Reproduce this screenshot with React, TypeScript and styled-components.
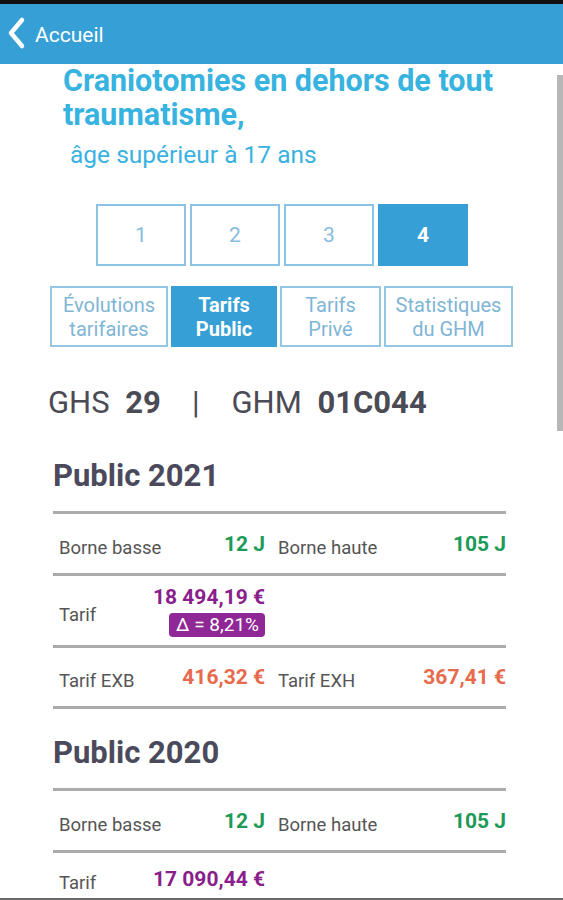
import React, { FC } from 'react';
import styled, { createGlobalStyle } from 'styled-components';

type Tone = 'green' | 'purple' | 'orange';

type Cell = {
  label: string;
  value: string;
  tone: Tone;
  badge?: string;
};

type Row = {
  cells: Cell[];
  height: number;
};

type Section = {
  title: string;
  rows: Row[];
};

const tones = {
  green: '#1d9a57',
  purple: '#8a1f8c',
  orange: '#e86a4c',
};

const sections: Section[] = [
  {
    title: 'Public 2021',
    rows: [
      {
        height: 59,
        cells: [
          { label: 'Borne basse', value: '12 J', tone: 'green' },
          { label: 'Borne haute', value: '105 J', tone: 'green' },
        ],
      },
      {
        height: 69,
        cells: [{ label: 'Tarif', value: '18 494,19 €', tone: 'purple', badge: 'Δ = 8,21%' }],
      },
      {
        height: 58,
        cells: [
          { label: 'Tarif EXB', value: '416,32 €', tone: 'orange' },
          { label: 'Tarif EXH', value: '367,41 €', tone: 'orange' },
        ],
      },
    ],
  },
  {
    title: 'Public 2020',
    rows: [
      {
        height: 59,
        cells: [
          { label: 'Borne basse', value: '12 J', tone: 'green' },
          { label: 'Borne haute', value: '105 J', tone: 'green' },
        ],
      },
      {
        height: 52,
        cells: [{ label: 'Tarif', value: '17 090,44 €', tone: 'purple' }],
      },
    ],
  },
];

const pages = ['1', '2', '3', '4'];
const tabs = [
  { label: 'Évolutions tarifaires', width: 118 },
  { label: 'Tarifs Public', width: 106, active: true },
  { label: 'Tarifs Privé', width: 101 },
  { label: 'Statistiques du GHM', width: 129 },
];

const App: FC = () => {
  return (
    <Screen>
      <GlobalStyle />
      <StatusBar />
      <Header>
        <BackIcon width="20" height="34" viewBox="0 0 20 34">
          <path d="M15 4 L4 17 L15 30" fill="none" stroke="#fff" strokeWidth="4.5" strokeLinecap="round" strokeLinejoin="round" />
        </BackIcon>
        <HeaderTitle>Accueil</HeaderTitle>
      </Header>
      <Body>
        <ScrollThumb />
        <Title>Craniotomies en dehors de tout traumatisme,</Title>
        <Subtitle>âge supérieur à 17 ans</Subtitle>

        <Pager>
          {pages.map((p) => (
            <PageBox key={p} $active={p === '4'}>
              {p}
            </PageBox>
          ))}
        </Pager>

        <Tabs>
          {tabs.map((t) => (
            <Tab key={t.label} $active={!!t.active} $width={t.width}>
              {t.label}
            </Tab>
          ))}
        </Tabs>

        <CodeLine>
          GHS <b>29</b>
          <Sep>|</Sep>
          GHM <b>01C044</b>
        </CodeLine>

        {sections.map((s) => (
          <Block key={s.title}>
            <BlockTitle>{s.title}</BlockTitle>
            <Table>
              {s.rows.map((r, i) => (
                <TableRow key={i} $height={r.height}>
                  {r.cells.map((c) => (
                    <TableCell key={c.label}>
                      <CellLabel>{c.label}</CellLabel>
                      <CellValue>
                        <Amount $tone={c.tone}>{c.value}</Amount>
                        {c.badge && <Badge>{c.badge}</Badge>}
                      </CellValue>
                    </TableCell>
                  ))}
                </TableRow>
              ))}
            </Table>
          </Block>
        ))}
      </Body>
      <BottomEdge />
    </Screen>
  );
};

export default App;

const GlobalStyle = createGlobalStyle`
  html, body {
    margin: 0;
    padding: 0;
    background: #fff;
  }
  body {
    font-family: Roboto, "Liberation Sans", sans-serif;
    overflow: hidden;
  }
`;

const Screen = styled.div`
  width: 563px;
  height: 900px;
  display: flex;
  flex-direction: column;
  overflow: hidden;
  position: relative;
`;

const StatusBar = styled.div`
  height: 4px;
  background: #111;
  flex-shrink: 0;
`;

const Header = styled.div`
  height: 60px;
  flex-shrink: 0;
  background: #369fd6;
  display: flex;
  align-items: center;
  padding-left: 7px;
  gap: 8px;
`;

const BackIcon = styled.svg`
  display: block;
  margin-top: -2px;
`;

const HeaderTitle = styled.span`
  color: #fff;
  font-size: 21px;
  margin-top: 1px;
`;

const Body = styled.div`
  flex: 1;
  position: relative;
  overflow: hidden;
`;

const ScrollThumb = styled.div`
  position: absolute;
  right: 0;
  top: 11px;
  width: 6px;
  height: 356px;
  background: #b7b7b7;
`;

const Title = styled.h1`
  margin: 0 50px 0 63px;
  font-size: 30.5px;
  line-height: 34px;
  font-weight: 700;
  color: #37b3e0;
`;

const Subtitle = styled.div`
  margin: 8px 0 0 70px;
  font-size: 24.5px;
  line-height: 30px;
  color: #3ab2df;
`;

const Pager = styled.div`
  display: flex;
  gap: 4px;
  margin: 34px 0 0 96px;
`;

const PageBox = styled.div<{ $active: boolean }>`
  width: 90px;
  height: 62px;
  box-sizing: border-box;
  border: 2px solid ${(p) => (p.$active ? '#369fd6' : '#8cc3e3')};
  background: ${(p) => (p.$active ? '#369fd6' : '#fff')};
  color: ${(p) => (p.$active ? '#fff' : '#86bde0')};
  font-weight: ${(p) => (p.$active ? 700 : 400)};
  font-size: 21px;
  display: flex;
  align-items: center;
  justify-content: center;
`;

const Tabs = styled.div`
  display: flex;
  gap: 3px;
  margin: 20px 0 0 50px;
`;

const Tab = styled.div<{ $active: boolean; $width: number }>`
  width: ${(p) => p.$width}px;
  height: 61px;
  box-sizing: border-box;
  border: 2px solid ${(p) => (p.$active ? '#369fd6' : '#95c7e4')};
  background: ${(p) => (p.$active ? '#369fd6' : '#fff')};
  color: ${(p) => (p.$active ? '#fff' : '#7fb5d6')};
  font-weight: ${(p) => (p.$active ? 700 : 400)};
  font-size: 20px;
  line-height: 24px;
  text-align: center;
  display: flex;
  align-items: center;
  justify-content: center;
  padding: 0 2px;
`;

const CodeLine = styled.div`
  margin: 38px 0 0 48px;
  font-size: 31px;
  line-height: 36px;
  color: #4b4b55;
  b {
    font-weight: 700;
    margin-left: 8px;
  }
`;

const Sep = styled.span`
  margin: 0 32px 0 31px;
`;

const Block = styled.div`
  margin: 37px 0 0 53px;
  width: 453px;
  & + & {
    margin-top: 26px;
  }
`;

const BlockTitle = styled.div`
  font-size: 31px;
  line-height: 36px;
  font-weight: 700;
  color: #4a4a5c;
`;

const Table = styled.div`
  margin-top: 17px;
  border-top: 3px solid #ababab;
`;

const TableRow = styled.div<{ $height: number }>`
  display: grid;
  grid-template-columns: 212px 1fr;
  column-gap: 7px;
  height: ${(p) => p.$height}px;
  border-bottom: 3px solid #ababab;
  align-items: center;
`;

const TableCell = styled.div`
  display: flex;
  align-items: center;
  justify-content: space-between;
  padding-left: 6px;
`;

const CellLabel = styled.span`
  font-size: 18.5px;
  color: #555;
  margin-top: 8px;
`;

const CellValue = styled.div`
  display: flex;
  flex-direction: column;
  align-items: flex-end;
  gap: 4px;
`;

const Amount = styled.span<{ $tone: Tone }>`
  font-size: 21px;
  font-weight: 700;
  color: ${(p) => tones[p.$tone]};
`;

const Badge = styled.span`
  background: #8f2896;
  color: #fff;
  font-size: 19px;
  line-height: 24px;
  border-radius: 4px;
  padding: 0 6px 0 7px;
`;

const BottomEdge = styled.div`
  position: absolute;
  left: 0;
  right: 0;
  bottom: 0;
  height: 2px;
  background: #6a6a6a;
`;
